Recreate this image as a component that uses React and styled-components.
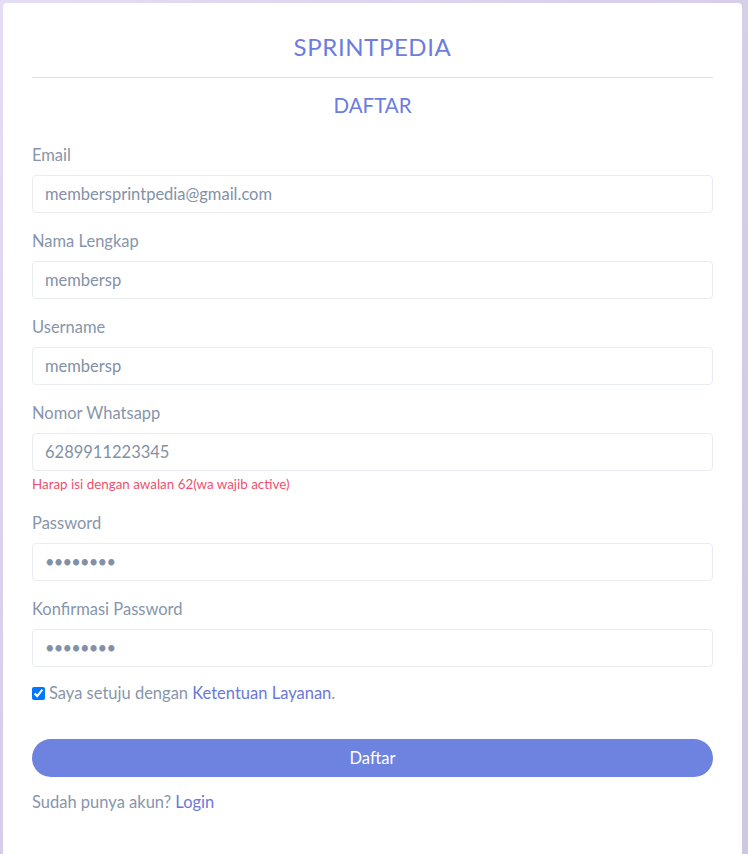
import React from "react";
import styled, { createGlobalStyle } from "styled-components";

const GlobalStyle = createGlobalStyle`
  html, body {
    margin: 0;
    padding: 0;
  }
  body {
    font-family: "Lato", "Noto Sans", sans-serif;
    background: linear-gradient(135deg, #e4ddf3 0%, #d6cde8 50%, #cfc6e2 100%);
    min-height: 854px;
  }
`;

const Page = styled.div`
  padding: 3px 6px 0 3px;
  height: 851px;
  overflow: hidden;
`;

const Card = styled.div`
  background: #fff;
  border-radius: 4px 4px 0 0;
  padding: 20px 29px 40px 29px;
  min-height: 900px;
  box-sizing: border-box;
`;

const Brand = styled.h1`
  margin: 0;
  text-align: center;
  font-size: 24px;
  font-weight: 400;
  letter-spacing: 0.6px;
  color: #6c7ddf;
  line-height: 48px;
`;

const Divider = styled.hr`
  border: none;
  border-top: 1px solid #e2e2e2;
  margin: 6px 0 0;
`;

const Heading = styled.h2`
  margin: 0;
  text-align: center;
  font-size: 20.5px;
  font-weight: 400;
  color: #6c7ddf;
  line-height: 54px;
`;

const Form = styled.form`
  display: flex;
  flex-direction: column;
  padding-top: 11px;
`;

const Field = styled.div`
  display: flex;
  flex-direction: column;
  margin-bottom: ${(p) => p.$gap}px;
`;

const Label = styled.label`
  font-size: 16.5px;
  color: #8795ab;
  line-height: 24px;
  margin-bottom: 8px;
`;

const Input = styled.input`
  box-sizing: border-box;
  height: 38px;
  width: 100%;
  border: 1px solid #e9ecf1;
  border-radius: 4px;
  padding: 0 12px;
  font-family: inherit;
  font-size: 16.5px;
  color: #8391a7;
  background: #fff;
  outline: none;
  &[type="password"] {
    letter-spacing: -0.8px;
  }
`;

const Hint = styled.span`
  font-size: 13.4px;
  color: #f0506e;
  margin-top: 5px;
  line-height: 16px;
`;

const Agree = styled.label`
  display: flex;
  align-items: center;
  gap: 4px;
  font-size: 16.5px;
  color: #8795ab;
  line-height: 24px;
  input {
    margin: 0;
    width: 13px;
    height: 13px;
  }
`;

const Link = styled.a`
  color: #6a78d9;
  text-decoration: none;
`;

const Submit = styled.button`
  margin-top: 34px;
  height: 38px;
  border: none;
  border-radius: 19px;
  background: #6e83df;
  color: #fff;
  font-family: inherit;
  font-size: 16.5px;
`;

const Footer = styled.p`
  margin: 13px 0 0;
  font-size: 16.5px;
  color: #8795ab;
  line-height: 24px;
`;

const fields = [
  { label: "Email", value: "membersprintpedia@gmail.com", type: "email" },
  { label: "Nama Lengkap", value: "membersp" },
  { label: "Username", value: "membersp" },
  {
    label: "Nomor Whatsapp",
    value: "6289911223345",
    hint: "Harap isi dengan awalan 62(wa wajib active)",
  },
  { label: "Password", value: "12345678", type: "password" },
  { label: "Konfirmasi Password", value: "12345678", type: "password" },
];

export default function App() {
  return (
    <>
      <GlobalStyle />
      <Page>
        <Card>
          <Brand>SPRINTPEDIA</Brand>
          <Divider />
          <Heading>DAFTAR</Heading>
          <Form onSubmit={(e) => e.preventDefault()}>
            {fields.map((f, i) => (
              <Field
                key={f.label}
                $gap={i === fields.length - 1 ? 14 : f.hint ? 19 : 16}
              >
                <Label>{f.label}</Label>
                <Input type={f.type || "text"} defaultValue={f.value} />
                {f.hint && <Hint>{f.hint}</Hint>}
              </Field>
            ))}
            <Agree>
              <input type="checkbox" defaultChecked />
              <span>
                Saya setuju dengan <Link href="#">Ketentuan Layanan</Link>.
              </span>
            </Agree>
            <Submit type="submit">Daftar</Submit>
            <Footer>
              Sudah punya akun? <Link href="#">Login</Link>
            </Footer>
          </Form>
        </Card>
      </Page>
    </>
  );
}
